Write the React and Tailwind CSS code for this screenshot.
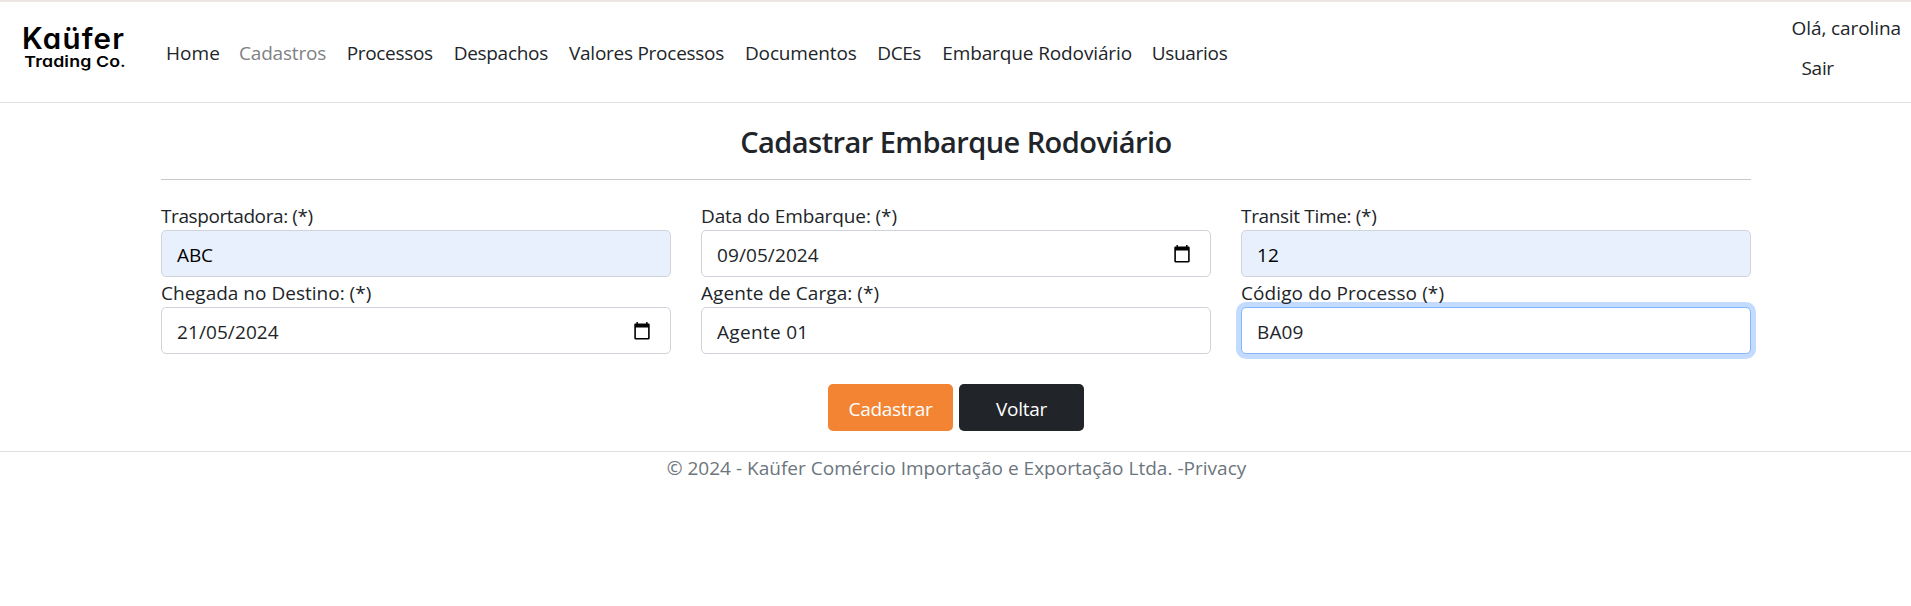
const links = [
  { text: "Home", cls: "w-[73px] tracking-[0.091px]" },
  { text: "Cadastros", cls: "w-[107.7px] tracking-[-0.18px] text-[#7f8284]" },
  { text: "Processos", cls: "w-[107px] tracking-[-0.33px]" },
  { text: "Despachos", cls: "w-[115.3px] tracking-[-0.3px]" },
  { text: "Valores Processos", cls: "w-[176px] tracking-[-0.26px]" },
  { text: "Documentos", cls: "w-[132.3px] tracking-[-0.154px]" },
  { text: "DCEs", cls: "w-[65px] tracking-[-0.437px]" },
  { text: "Embarque Rodoviário", cls: "w-[209.4px] tracking-[-0.122px]" },
  { text: "Usuarios", cls: "w-[77px] tracking-[-0.3px]" },
];

const fields = [
  { label: "Trasportadora: (*)", ls: "tracking-[-0.4px]", value: "ABC", vs: "tracking-[-0.094px]", filled: true },
  { label: "Data do Embarque: (*)", ls: "tracking-[-0.11px]", value: "09/05/2024", vs: "tracking-[0.09px]", date: true },
  { label: "Transit Time: (*)", ls: "tracking-[-0.33px]", value: "12", vs: "tracking-[0.036px]", filled: true },
  { label: "Chegada no Destino: (*)", ls: "tracking-[0.011px]", value: "21/05/2024", vs: "tracking-[0.09px]", date: true },
  { label: "Agente de Carga: (*)", ls: "tracking-[0.057px]", value: "Agente 01", vs: "tracking-[0.3px]" },
  { label: "Código do Processo (*)", ls: "tracking-[0.094px]", value: "BA09", vs: "tracking-[0.116px]", focused: true },
];

function CalendarIcon() {
  return (
    <svg className="h-[18px] w-4" viewBox="0 0 16 18" fill="#000">
      <path
        fillRule="evenodd"
        d="M2.4 0h1.5v1.6h8.2V0h1.5v1.6h.9c.7 0 1.2.5 1.2 1.2v13.5c0 .7-.5 1.2-1.2 1.2h-13c-.7 0-1.2-.5-1.2-1.2V2.8c0-.7.5-1.2 1.2-1.2h1.1zM1.9 5.4v10.6h12.2V5.4z"
      />
    </svg>
  );
}

function Field({ label, ls, value, vs, filled, date, focused }) {
  const tone = filled
    ? "border-[#ced4da] bg-[#e8f0fe] text-black"
    : focused
      ? "border-[#86b7fe] bg-white shadow-[0_0_0_5px_#c2dbfe]"
      : "border-[#ced4da] bg-white";
  return (
    <div>
      <div className={"relative z-10 h-[30px] whitespace-nowrap pt-0.5 leading-[29px] " + ls}>{label}</div>
      <div className={"flex h-[47px] items-center justify-between rounded-[5px] border pl-[15px] pr-5 " + tone}>
        <span className={"pt-0.5 leading-[30px] " + vs}>{value}</span>
        {date && <CalendarIcon />}
      </div>
    </div>
  );
}

export default function App() {
  return (
    <div className="h-[606px] overflow-hidden bg-white font-['Open_Sans','Noto_Sans',sans-serif] text-[19px] text-[#212529]">
      <header className="flex h-[103px] border-b border-t-2 border-b-[#dee2e6] border-t-[#ebe6e3]">
        <div className="w-[166px] shrink-0 pl-[22px] pt-[19px] font-['Inter','Open_Sans',sans-serif] text-black [font-feature-settings:'cv11']">
          <div className="whitespace-nowrap text-[29.5px] font-semibold leading-[34px] tracking-[1.2px]">Kaüfer</div>
          <div className="w-[90px] origin-left scale-x-[1.17] whitespace-nowrap pl-0.5 text-[15.2px] font-semibold leading-[14px] tracking-[0.1px]">
            Trading Co.
          </div>
        </div>
        <nav className="flex flex-1 pt-9">
          {links.map((l) => (
            <a key={l.text} className={"shrink-0 whitespace-nowrap leading-[30px] " + l.cls}>{l.text}</a>
          ))}
        </nav>
        <div className="w-[119.5px] shrink-0 pt-[11px]">
          <div className="whitespace-nowrap leading-[30px] tracking-[-0.08px]">Olá, carolina</div>
          <div className="pl-2.5 pt-2.5 leading-[30px] tracking-[-0.3px]">Sair</div>
        </div>
      </header>
      <main className="ml-[161px] w-[1590px]">
        <h1 className="pt-[21px] text-center text-[29px] font-semibold leading-9 tracking-[-0.56px]">
          Cadastrar Embarque Rodoviário
        </h1>
        <div className="mt-[19px] border-t border-[#c8c9ca]" />
        <div className="mt-5 grid grid-cols-3 gap-x-[30px]">
          {fields.map((f) => (
            <Field key={f.label} {...f} />
          ))}
        </div>
        <div className="mt-[30px] flex justify-center gap-1.5 text-white">
          <button className="h-[47px] w-[125px] rounded-[5px] bg-[#f28434] pt-[3px] tracking-[-0.282px]">Cadastrar</button>
          <button className="h-[47px] w-[125px] rounded-[5px] bg-[#212529] pt-[3px] tracking-[-0.277px]">Voltar</button>
        </div>
      </main>
      <footer className="mt-5 border-t border-[#dee2e6] pt-px pl-0.5 text-center leading-[30px] tracking-[0.02px] text-[#6c757d]">
        © 2024 - Kaüfer Comércio Importação e Exportação Ltda. -Privacy
      </footer>
    </div>
  );
}
